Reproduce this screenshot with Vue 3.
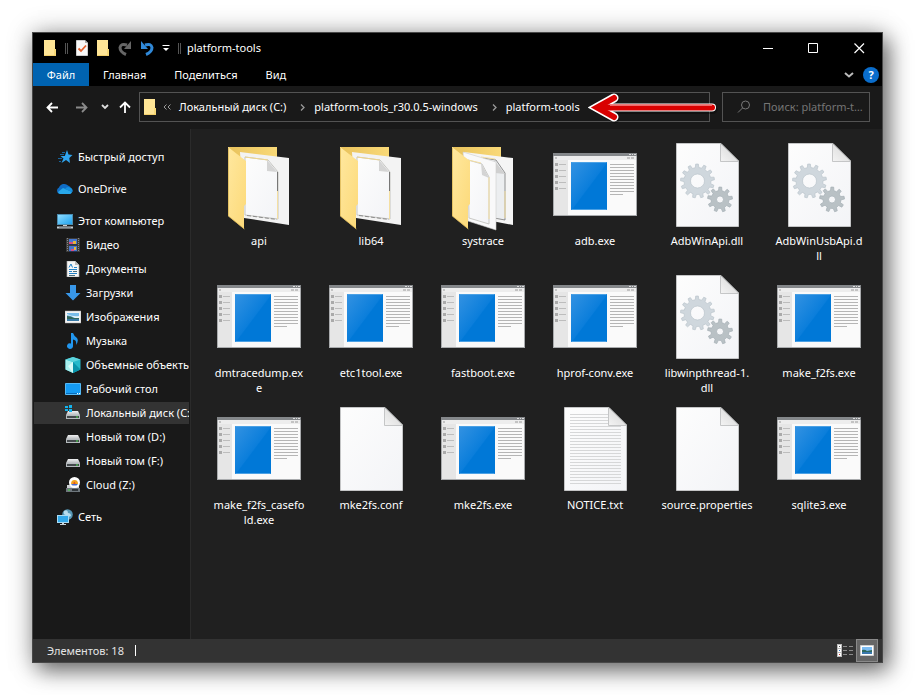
<script setup>
import { ref } from 'vue'

const tabs = ['Главная', 'Поделиться', 'Вид']
const crumbs = ['Локальный диск (C:)', 'platform-tools_r30.0.5-windows', 'platform-tools']

const groups = [
  [{ name: 'Быстрый доступ', icon: 'star' }],
  [{ name: 'OneDrive', icon: 'cloud' }],
  [
    { name: 'Этот компьютер', icon: 'pc' },
    { name: 'Видео', icon: 'video', child: true },
    { name: 'Документы', icon: 'docs', child: true },
    { name: 'Загрузки', icon: 'down', child: true },
    { name: 'Изображения', icon: 'image', child: true },
    { name: 'Музыка', icon: 'music', child: true },
    { name: 'Объемные объекты', icon: 'cube', child: true },
    { name: 'Рабочий стол', icon: 'desk', child: true },
    { name: 'Локальный диск (C:)', icon: 'sysdrive', child: true },
    { name: 'Новый том (D:)', icon: 'drive', child: true },
    { name: 'Новый том (F:)', icon: 'drive', child: true },
    { name: 'Cloud (Z:)', icon: 'netdrive', child: true },
  ],
  [{ name: 'Сеть', icon: 'network' }],
]
const current = ref('Локальный диск (C:)')

const files = [
  { lines: ['api'], icon: 'folder' },
  { lines: ['lib64'], icon: 'folder' },
  { lines: ['systrace'], icon: 'folders' },
  { lines: ['adb.exe'], icon: 'exe' },
  { lines: ['AdbWinApi.dll'], icon: 'dll' },
  { lines: ['AdbWinUsbApi.d', 'll'], icon: 'dll' },
  { lines: ['dmtracedump.ex', 'e'], icon: 'exe' },
  { lines: ['etc1tool.exe'], icon: 'exe' },
  { lines: ['fastboot.exe'], icon: 'exe' },
  { lines: ['hprof-conv.exe'], icon: 'exe' },
  { lines: ['libwinpthread-1.', 'dll'], icon: 'dll' },
  { lines: ['make_f2fs.exe'], icon: 'exe' },
  { lines: ['make_f2fs_casefo', 'ld.exe'], icon: 'exe' },
  { lines: ['mke2fs.conf'], icon: 'page' },
  { lines: ['mke2fs.exe'], icon: 'exe' },
  { lines: ['NOTICE.txt'], icon: 'txt' },
  { lines: ['source.properties'], icon: 'page' },
  { lines: ['sqlite3.exe'], icon: 'exe' },
]

function gear(cx, cy, outer, inner, hole, teeth) {
  const step = (Math.PI * 2) / teeth
  const at = (r, a) => `${(cx + r * Math.cos(a)).toFixed(2)} ${(cy + r * Math.sin(a)).toFixed(2)}`
  let d = ''
  for (let i = 0; i < teeth; i++) {
    const a = i * step - 0.15
    d += `${i ? 'L' : 'M'}${at(inner, a - step * 0.27)}L${at(outer, a - step * 0.16)}L${at(outer, a + step * 0.16)}L${at(inner, a + step * 0.27)}`
  }
  return `${d}ZM${cx - hole} ${cy}a${hole} ${hole} 0 1 0 ${hole * 2} 0a${hole} ${hole} 0 1 0 ${-hole * 2} 0Z`
}
const bigGear = gear(32.5, 38, 17, 13.5, 7, 13)
const smallGear = gear(55, 56.5, 12.5, 9, 3.5, 9)
</script>

<template>
  <svg class="defs" width="0" height="0" aria-hidden="true">
    <defs>
      <linearGradient id="gFold" x1="0" y1="0" x2="1" y2="1">
        <stop offset="0" stop-color="#ffe89f" /><stop offset="1" stop-color="#fcd978" />
      </linearGradient>
      <linearGradient id="gBack" x1="0" y1="0" x2="1" y2="0">
        <stop offset="0" stop-color="#e8c25c" /><stop offset="1" stop-color="#f9d978" />
      </linearGradient>
      <linearGradient id="gPage" x1="0" y1="0" x2="1" y2="1">
        <stop offset="0" stop-color="#fdfdfd" /><stop offset="1" stop-color="#f3f4f7" />
      </linearGradient>
      <linearGradient id="gCurl" x1="0" y1="1" x2="1" y2="0">
        <stop offset="0" stop-color="#f4f4f4" /><stop offset="1" stop-color="#d2d2d2" />
      </linearGradient>
      <linearGradient id="gBlue" x1="0" y1="0" x2="1" y2="1">
        <stop offset="0" stop-color="#3392e2" /><stop offset="0.5" stop-color="#0b7edb" /><stop offset="0.52" stop-color="#0078d7" />
      </linearGradient>
      <linearGradient id="gScreen" x1="0" y1="0" x2="1" y2="1">
        <stop offset="0" stop-color="#8ddcff" /><stop offset="1" stop-color="#1fa2ee" />
      </linearGradient>
      <linearGradient id="gDrive" x1="0" y1="0" x2="0" y2="1">
        <stop offset="0" stop-color="#f0f1f2" /><stop offset="1" stop-color="#b9bcbf" />
      </linearGradient>
    </defs>

    <symbol id="folder" viewBox="0 0 84 88">
      <path d="M11 4H60V70H11Z" fill="url(#gBack)" />
      <path d="M23 9 72 15V82L27 75Z" fill="#f3f3f3" />
      <path d="M28 14 51 17 61 29V76L28 72Z" fill="url(#gPage)" stroke="#b9b9b4" stroke-width="0.8" />
      <path d="M28 14 51 17" stroke="#efd58c" />
      <path d="M60.500 29V48" stroke="#777" />
      <path d="M60.500 48V76" stroke="#f4dfa2" />
      <path d="M30 72.500 60 76.500" stroke="#777" stroke-dasharray="4 2" stroke-width="0.8" />
      <path d="M50 17 60 29 50 28Z" fill="#d4d4d4" />
      <path d="M11 4 29 18V61L27 63V86L11 73Z" fill="url(#gFold)" />
      <path d="M11.5 5V73L27.5 86" fill="none" stroke="#d9b350" stroke-width="0.7" />
    </symbol>
    <symbol id="folders" viewBox="0 0 84 88">
      <path d="M11 4H60V70H11Z" fill="url(#gBack)" />
      <path d="M23 9 72 15V82L30 74Z" fill="#f5f5f5" />
      <path d="M42 15 55 17 64 30V77L53 75Z" fill="#eceef0" stroke="#777" stroke-width="0.8" />
      <path d="M64 48V75M40 14 54 16" stroke="#f4dfa2" />
      <path d="M53 17 64 31 54 30Z" fill="#d0d0d0" />
      <path d="M22 9 55 19V87L27 78Z" fill="#f9f9fa" stroke="#ccc" stroke-width="0.6" />
      <path d="M27 17 41 21 48 34V81L28 75Z" fill="url(#gPage)" stroke="#bdbdb8" stroke-width="0.8" />
      <path d="M48 34V76M27 17 40 20" stroke="#f4dfa2" />
      <path d="M40 20 48 35 41 32Z" fill="#d4d4d4" />
      <path d="M11 4 29 18V61L27 63V86L11 73Z" fill="url(#gFold)" />
      <path d="M11.5 5V73L27.5 86" fill="none" stroke="#d9b350" stroke-width="0.7" />
    </symbol>
    <symbol id="page" viewBox="0 0 84 88">
      <path d="M11.5 0.5H56L73.500 18V83.500H11.500Z" fill="url(#gPage)" stroke="#c4c5c6" />
      <path d="M55.500 0.5V18.500H74Z" fill="url(#gCurl)" stroke="#b9babb" stroke-width="0.8" />
    </symbol>
    <symbol id="txt" viewBox="0 0 84 88">
      <use href="#page" width="84" height="88" />
      <path d="M17 7.500H55M17 10.500H55M17 13.500H55M17 16.500H55" stroke="#d6d7d8" />
      <path v-for="n in 20" :key="n" :d="`M17 ${n * 3 + 16.5}H68`" stroke="#d6d7d8" />
    </symbol>
    <symbol id="dll" viewBox="0 0 84 88">
      <use href="#page" width="84" height="88" />
      <path :d="bigGear" fill="#cfd7dd" fill-rule="evenodd" stroke="#bac4cb" stroke-width="0.7" />
      <path :d="smallGear" fill="#b9c1c5" fill-rule="evenodd" stroke="#a5afb4" stroke-width="0.7" />
    </symbol>
    <symbol id="exe" viewBox="0 0 84 88">
      <path d="M0 10H84V73H0Z" fill="#a9abad" />
      <path d="M0 10H84V13H0Z" fill="#84878a" />
      <path d="M76 11.500h2M79 11.500h1M81 11.500h2" stroke="#ddd" />
      <path d="M1 13H83V17H1Z" fill="#ededed" />
      <path d="M2 14h2v2H2ZM74 14h3v2h-3ZM78 14h3v2h-3Z" fill="#c3c3c3" />
      <path d="M1 17H83V72H1Z" fill="#fafafa" />
      <path d="M1 17H15V72H1Z" fill="#e6e6e6" />
      <g v-for="n in 5" :key="n">
        <rect x="2" :y="n * 6 + 14" width="3" height="3" fill="#aaa" />
        <path :d="`M6 ${n * 6 + 15.5}H13`" stroke="#bdbdbd" />
      </g>
      <path d="M18 19H54V67H18Z" fill="url(#gBlue)" />
      <path d="M18.500 19.500H53.500M18.500 66.500H53.500" stroke="#4ba1e5" />
      <path v-for="n in 10" :key="n" :d="`M57 ${n * 3 + 18.500}H81`" stroke="#b5b5b5" />
      <path d="M57 51.500H70" stroke="#b5b5b5" />
    </symbol>

    <symbol id="star" viewBox="0 0 16 16">
      <path d="M10 1 11.500 5.500 15.500 6 12.300 9 13 14 9 11 4.500 14 6.500 9.500 3.500 7H7.800Z" fill="#2fa5f0" />
      <path d="M5 3.500H8M3 5.500H7M1 9.500H5M2 12.500H4" stroke="#1679c0" stroke-width="0.8" />
    </symbol>
    <symbol id="cloud" viewBox="0 0 16 16">
      <path d="M2.500 13A3.500 3.500 0 0 1 2 6.500 5.500 5.500 0 0 1 11 4.500 4 4 0 0 1 14 8 3 3 0 0 1 13 13Z" fill="#0f6cc4" />
      <path d="M1 11 6 7 15 11A2.500 2.500 0 0 1 13 13H3A3 3 0 0 1 1 11Z" fill="#28a8ea" />
      <path d="M8 8Q10 5 13 6.500A3.500 3.500 0 0 1 15.500 11Z" fill="#1490df" />
    </symbol>
    <symbol id="pc" viewBox="0 0 16 16">
      <path d="M0 1H16V12H0Z" fill="#4d8db0" /><path d="M1 2H15V11H1Z" fill="url(#gScreen)" />
      <path d="M6 12h4v1H6Z" fill="#ccc" /><path d="M0 14.500H16" stroke="#c3ccd2" stroke-width="2" />
      <path d="M2 14.500H14" stroke="#8c969d" />
    </symbol>
    <symbol id="video" viewBox="0 0 16 16">
      <path d="M1 1H15V15H1Z" fill="#3c3c3c" />
      <path d="M2.500 1V15M13.500 1V15" stroke="#888" stroke-dasharray="1 1" />
      <path d="M4 2H12V8H4ZM4 9H12V15H4Z" fill="#4778cf" />
      <path d="M4 5H8V7H4ZM6 12h3v2H6Z" fill="#d54c81" /><path d="M8 4h3v3H8ZM9 10h2v3H9Z" fill="#e6b53a" />
      <path d="M4 7h8v1H4ZM4 14h8v1H4Z" fill="#273556" />
    </symbol>
    <symbol id="docs" viewBox="0 0 16 16">
      <path d="M2 0H10L14 4V16H2Z" fill="#f6f6f6" stroke="#a7a7a7" stroke-width="0.7" />
      <path d="M10 0V4H14Z" fill="#bbb" />
      <path d="M4 6.500 6 3 7.500 6.500M4 8.500H12M4 10.500H7M4 12.500H12M9 6.500H12" stroke="#2382c9" fill="none" />
      <path d="M8 10h4v1H8ZM4 14h6v1H4Z" fill="#496d7c" />
    </symbol>
    <symbol id="down" viewBox="0 0 16 16">
      <path d="M5 0H11V8H15.500L8 15.500 0.500 8H5Z" fill="#3897e9" />
    </symbol>
    <symbol id="image" viewBox="0 0 16 16">
      <path d="M0 2H16V14H0Z" fill="#f3f3f3" stroke="#aaa" stroke-width="0.5" />
      <path d="M2 4H14V12H2Z" fill="#78bce9" /><path d="M2 6 6 7 10 9H14V7Q8 8 2 5Z" fill="#e7f2f6" />
      <path d="M2 7Q6 7 9 9H14V10H2Z" fill="#31665c" /><path d="M2 10H14V12H2Z" fill="#397ba7" />
    </symbol>
    <symbol id="music" viewBox="0 0 16 16">
      <path d="M8 0Q9 3 12 5 14 8 11 12 12 7 8 6.500V13A3 2.800 0 1 1 6 10.500V0Z" fill="#2196ee" />
    </symbol>
    <symbol id="cube" viewBox="0 0 16 16">
      <path d="M8 0 15.500 2.500V12.500L8 16 0.500 12.500V2.500Z" fill="#24b9cb" />
      <path d="M0.500 2.500 8 5V16L0.500 12.500Z" fill="#a9f0ee" /><path d="M0.500 2.500 8 0 15.500 2.500 8 5Z" fill="#5cd3dc" />
      <path d="M8 5 3 9 8 16Z" fill="#d8faf8" /><path d="M8 5 15.500 12.500 8 16Z" fill="#0794ab" />
    </symbol>
    <symbol id="desk" viewBox="0 0 16 16">
      <path d="M0.500 2.500H15.500V13.500H0.500Z" fill="#159bf3" stroke="#55b9f5" />
      <path d="M1 12.500H12" stroke="#076cba" /><path d="M12 12.500h1M14 12.500h1" stroke="#fff" />
    </symbol>
    <symbol id="drive" viewBox="0 0 16 16">
      <path d="M3 6H13L15 10H1Z" fill="url(#gDrive)" />
      <path d="M1 10H15V14H1Z" fill="#b5babd" /><path d="M2 11H14V13H2Z" fill="#44494c" />
      <path d="M11 12h2" stroke="#4be34b" />
    </symbol>
    <symbol id="sysdrive" viewBox="0 0 16 16">
      <use href="#drive" width="16" height="16" />
      <path d="M0 1h3v2H0ZM4 0h3v3H4ZM0 4h3v2H0ZM4 4h3v3H4Z" fill="#13b4ee" />
    </symbol>
    <symbol id="netdrive" viewBox="0 0 16 16">
      <path d="M2 8H14V11H2Z" fill="#ccd0d3" /><path d="M1 11H15V15H1Z" fill="#6e767c" />
      <path d="M3 13h2" stroke="#43d943" /><path d="M7 13h6" stroke="#30363a" stroke-width="2" />
      <circle cx="9.500" cy="5.500" r="5.500" fill="#fff" />
      <path d="M6 7A3.500 4 0 0 1 13 7Z" fill="#f0a420" /><path d="M6 7H13L11.500 8.500H7.500Z" fill="#466dcb" />
      <path d="M8.500 6Q9.500 3 10.500 7H8.500Z" fill="#e64f24" />
    </symbol>
    <symbol id="network" viewBox="0 0 16 16">
      <circle cx="10.500" cy="5.500" r="5.300" fill="#5798b7" />
      <path d="M7 2Q11 0 11 4 14 4 14 7 11 9 9 6 6 6 7 2Z" fill="#b7dced" />
      <path d="M0 6H12V14H0Z" fill="#a8dbf5" /><path d="M1 7H11V13H1Z" fill="#32a9eb" />
      <path d="M5 14h2v1H5ZM3 15h6v1H3Z" fill="#c9d3d8" />
    </symbol>
    <symbol id="smallfolder" viewBox="0 0 14 16">
      <path d="M1 0H12V9H13V16H1Z" fill="#f3d06b" /><path d="M1 0H12V15H1Z" fill="#ffe596" />
      <path d="M11 9H13V15H11Z" fill="#f7d978" />
    </symbol>
  </svg>

  <div class="desktop">
    <main class="window">
      <header class="titlebar">
        <svg class="i-folder" viewBox="0 0 14 16"><use href="#smallfolder" /></svg>
        <span class="grip"></span>
        <button class="quick" aria-label="Свойства">
          <svg width="12" height="16" viewBox="0 0 12 16">
            <path d="M0.500 0.500H9L11.500 3V15.500H0.500Z" fill="#f7f7f7" stroke="#ccc" /><path d="M9 0V3H12" fill="#aaa" />
            <path d="M2.500 8.500 5 11 10 5.500" fill="none" stroke="#e2602d" stroke-width="1.800" />
          </svg>
        </button>
        <button class="quick" aria-label="Новая папка"><svg class="i-folder" viewBox="0 0 14 16"><use href="#smallfolder" /></svg></button>
        <button class="quick" aria-label="Вернуть">
          <svg width="14" height="16" viewBox="0 0 14 16"><path d="M8 14.500Q2 12 2 7.500 3 3 9 5" fill="none" stroke="#666" stroke-width="3" /><path d="M13 1V9H6Z" fill="#666" /></svg>
        </button>
        <button class="quick" aria-label="Отменить">
          <svg width="14" height="16" viewBox="0 0 14 16"><path d="M6 14.500Q12 12 12 7.500 11 3 5 5" fill="none" stroke="#3089d9" stroke-width="3" /><path d="M1 1V9H8Z" fill="#3089d9" /></svg>
        </button>
        <button class="quick more" aria-label="Настройка панели">
          <svg width="8" height="8" viewBox="0 0 8 8"><path d="M0.500 1.500H7.500" stroke="#fff" /><path d="M1 4H7L4 7Z" fill="#fff" /></svg>
        </button>
        <span class="grip"></span>
        <h1>platform-tools</h1>
        <div class="controls">
          <button aria-label="Свернуть"><svg width="11" height="11" viewBox="0 0 11 11"><path d="M0 5.500H10" stroke="#fff" /></svg></button>
          <button aria-label="Развернуть"><svg width="11" height="11" viewBox="0 0 11 11"><path d="M0.500 0.500H9.500V9.500H0.500Z" stroke="#fff" fill="none" /></svg></button>
          <button aria-label="Закрыть"><svg width="11" height="11" viewBox="0 0 11 11"><path d="M0.500 0.500 10 10M10 0.500 0.500 10" stroke="#fff" stroke-width="1.200" /></svg></button>
        </div>
      </header>

      <nav class="tabs">
        <button class="file">Файл</button>
        <button v-for="t in tabs" :key="t">{{ t }}</button>
        <span class="fill"></span>
        <button class="bare" aria-label="Развернуть ленту"><svg width="10" height="6" viewBox="0 0 10 6"><path d="M1 1 5 4.500 9 1" fill="none" stroke="#bbb" stroke-width="2" /></svg></button>
        <button class="bare help" aria-label="Справка">?</button>
      </nav>

      <div class="navbar">
        <button aria-label="Назад"><svg width="12" height="11" viewBox="0 0 12 11"><path d="M12 5.500H1.500M6 1 1.500 5.500 6 10" fill="none" stroke="#fff" stroke-width="1.800" /></svg></button>
        <button class="fwd" aria-label="Вперед"><svg width="12" height="11" viewBox="0 0 12 11"><path d="M0 5.500H10.500M6 1 10.500 5.500 6 10" fill="none" stroke="#8a8a8a" stroke-width="1.800" /></svg></button>
        <button class="recent" aria-label="Последние расположения"><svg width="8" height="6" viewBox="0 0 8 6"><path d="M1 1 4 4 7 1" fill="none" stroke="#ddd" stroke-width="1.800" /></svg></button>
        <button class="up" aria-label="Вверх"><svg width="12" height="12" viewBox="0 0 12 12"><path d="M6 12V1.500M1 6.500 6 1.500 11 6.500" fill="none" stroke="#fff" stroke-width="1.800" /></svg></button>

        <div class="address">
          <svg class="i-folder" viewBox="0 0 14 16"><use href="#smallfolder" /></svg>
          <svg class="dbl" width="8" height="6" viewBox="0 0 8 6"><path d="M3.500 0.500 1 3 3.500 5.500M7.500 0.500 5 3 7.500 5.500" fill="none" stroke="#999" /></svg>
          <template v-for="(c, i) in crumbs" :key="c">
            <svg v-if="i" class="sep" width="5" height="7" viewBox="0 0 5 7"><path d="M1 0.500 4 3.500 1 6.500" fill="none" stroke="#999" stroke-width="1.300" /></svg>
            <a href="#">{{ c }}</a>
          </template>
          <svg class="pointer" width="130" height="34" viewBox="0 0 130 34" aria-hidden="true">
            <g fill="none" stroke-linejoin="miter" stroke-linecap="round">
              <path d="M27 8 11 17.500 27 27M14 17.500H125" stroke="#000" stroke-width="9" opacity="0.3" />
              <path d="M26 6 9 15.500 26 25" stroke="#fff" stroke-width="9" />
              <path d="M14 15.500H124" stroke="#fff" stroke-width="8" />
              <path d="M26 6 9 15.500 26 25" stroke="#d90000" stroke-width="6" />
              <path d="M14 15.500H124" stroke="#d90000" stroke-width="6" />
            </g>
            <path d="M22 13.500H124" stroke="#ef6a6a" />
          </svg>
        </div>

        <label class="search">
          <svg width="14" height="14" viewBox="0 0 14 14"><circle cx="8.500" cy="5" r="4" fill="none" stroke="#777" /><path d="M5.500 8 1 12.500" stroke="#777" /></svg>
          <input type="text" placeholder="Поиск: platform-tools" aria-label="Поиск" />
        </label>
      </div>

      <div class="body">
        <aside class="tree">
          <ul v-for="(g, gi) in groups" :key="gi">
            <li v-for="n in g" :key="n.name">
              <button :class="{ child: n.child, on: current === n.name }" @click="current = n.name">
                <svg width="16" height="16"><use :href="'#' + n.icon" width="16" height="16" /></svg>
                <span>{{ n.name }}</span>
              </button>
            </li>
          </ul>
        </aside>
        <ul class="files">
          <li v-for="f in files" :key="f.lines[0]">
            <svg width="84" height="88"><use :href="'#' + f.icon" width="84" height="88" /></svg>
            <span v-for="l in f.lines" :key="l">{{ l }}</span>
          </li>
        </ul>
      </div>

      <footer class="status">
        <span>Элементов: 18</span><i></i>
        <span class="fill"></span>
        <button aria-label="Таблица">
          <svg width="17" height="14" viewBox="0 0 17 14">
            <path d="M0 0H5V13H0Z" fill="#bbb" />
            <path d="M1 1h3v3H1ZM1 5h3v3H1ZM1 9h3v3H1Z" fill="#fff" />
            <path d="M2 2h1v1H2Z" fill="#555" /><path d="M2 6h1v1H2Z" fill="#37c" /><path d="M2 10h1v1H2Z" fill="#c33" />
            <path d="M6 2.500h4M12 2.500h4M6 6.500h4M12 6.500h4M6 10.500h4M12 10.500h4" stroke="#8c8c8c" />
          </svg>
        </button>
        <button class="active" aria-label="Крупные значки">
          <svg width="14" height="11" viewBox="0 0 14 11"><path d="M0.500 0.500H13.500V10.500H0.500Z" fill="#fff" stroke="#ccc" /><path d="M2 2H12V9H2Z" fill="#7cbcf2" /><path d="M2 5Q5 4 7 6L12 5V7H2Z" fill="#2f6a5f" /><path d="M2 7H12V9H2Z" fill="#3a78ae" /></svg>
        </button>
      </footer>
    </main>
  </div>
</template>

<style>
body {
  background: #fff;
}
</style>

<style scoped>
.defs {
  position: absolute;
}
.desktop {
  box-sizing: border-box;
  min-height: 100vh;
  padding: 32px;
  display: flex;
  font: 11px/15px 'Noto Sans', 'Open Sans', sans-serif;
  color: #fff;
  overflow: hidden;
}
.window {
  flex: 1;
  min-width: 0;
  display: flex;
  flex-direction: column;
  border: 1px solid #484848;
  background: #191919;
  box-shadow: 6px 8px 20px rgba(0, 0, 0, 0.5), 0 0 24px rgba(0, 0, 0, 0.25);
}
button {
  font: inherit;
  color: inherit;
  background: none;
  border: 0;
  padding: 0;
  display: flex;
  align-items: center;
  justify-content: center;
}
svg {
  flex: none;
  display: block;
}
ul {
  list-style: none;
  margin: 0;
  padding: 0;
}
.fill {
  flex: 1;
}
.i-folder {
  width: 14px;
  height: 16px;
}
.titlebar {
  height: 30px;
  display: flex;
  align-items: center;
  background: #000;
  padding-left: 10px;
}
.grip {
  width: 1px;
  height: 11px;
  border: solid #555;
  border-width: 0 1px;
  margin: 0 8px;
}
.quick {
  margin: 0 8px 0 0;
}
.more {
  margin-right: 0;
}
h1 {
  margin: 0 auto 0 -2px;
  font: inherit;
}
h1,
.address a,
.search input,
.tree span {
  padding: 0 0 2px;
}
.controls {
  display: flex;
  align-self: stretch;
}
.controls button {
  width: 46px;
}
.controls button:nth-child(2) {
  width: 45px;
}
.tabs {
  height: 23px;
  display: flex;
  align-items: stretch;
  background: #000;
  padding-right: 3px;
}
.tabs button {
  padding: 0 14px;
}
.tabs .file {
  width: 56px;
  background: #0063b1;
}
.tabs .bare {
  padding: 0;
  align-self: center;
}
.tabs .help {
  width: 16px;
  height: 16px;
  margin-left: 9px;
  border-radius: 50%;
  background: #0a6dcc;
  font-weight: 700;
}
.navbar {
  display: flex;
  align-items: center;
  padding: 6px 12px 7px 13px;
}
.navbar .fwd {
  margin-left: 18px;
}
.navbar .recent {
  margin-left: 13px;
}
.navbar .up {
  margin: 0 8px 0 10px;
}
.address,
.search {
  box-sizing: border-box;
  height: 30px;
  border: 1px solid #535353;
  display: flex;
  align-items: center;
}
.address {
  position: relative;
  flex: 1;
  padding-left: 3px;
}
.address .dbl {
  margin: 0 8px 0 6px;
}
.address .sep {
  margin: 0 9px 0 14px;
}
.address a {
  color: #fff;
  text-decoration: none;
  white-space: nowrap;
}
.pointer {
  position: absolute;
  right: -9px;
  top: -1px;
}
.search {
  width: 148px;
  margin-left: 12px;
  padding-left: 14px;
  gap: 12px;
}
.search input {
  flex: 1;
  min-width: 0;
  border: 0;
  outline: 0;
  background: none;
  font: inherit;
  color: #fff;
  text-overflow: ellipsis;
}
.search input::placeholder {
  color: #757575;
  opacity: 1;
}
.body {
  flex: 1;
  display: flex;
}
.tree {
  box-sizing: border-box;
  width: 158px;
  padding: 17px 1px 0 1px;
  border-right: 1px solid #2b2b2b;
  display: flex;
  flex-direction: column;
  gap: 10px;
}
.tree ul {
  display: flex;
  flex-direction: column;
  gap: 2px;
}
.tree button {
  width: 100%;
  height: 22px;
  padding-left: 23px;
  gap: 5px;
  justify-content: flex-start;
  overflow: hidden;
  white-space: nowrap;
}
.tree .child {
  padding-left: 31px;
}
.tree .on {
  background: #333;
}
.files {
  flex: 1;
  background: #202020;
  padding: 14px 0 0 12px;
  display: grid;
  grid-template-columns: repeat(auto-fill, 112px);
  grid-auto-rows: 132px;
  align-content: start;
}
.files li {
  display: flex;
  flex-direction: column;
  align-items: center;
}
.files svg {
  margin-bottom: 2px;
}
.status {
  height: 23px;
  display: flex;
  align-items: stretch;
  background: #333;
  padding: 0 4px 0 14px;
}
.status span,
.status i {
  align-self: center;
}
.status span {
  color: #e3e3e3;
}
.status i {
  width: 1px;
  height: 11px;
  margin-left: 11px;
  background: #fff;
}
.status button {
  padding: 0 2px;
}
.status .active {
  box-sizing: border-box;
  width: 22px;
  background: #666;
  border: 1px solid #8a8a8a;
}
</style>
